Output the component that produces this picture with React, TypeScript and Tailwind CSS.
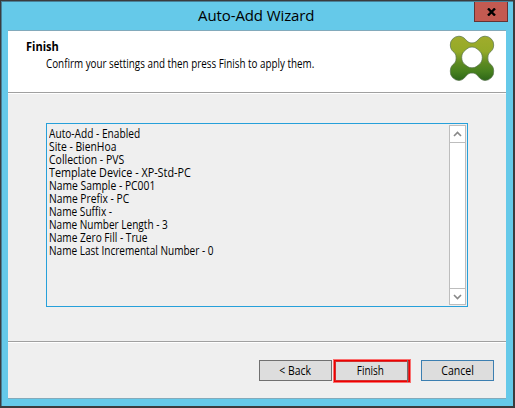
const lines = [
  { text: 'Auto-Add - Enabled', fit: 'scale-x-[0.845]' },
  { text: 'Site - BienHoa', fit: 'scale-x-[0.86]' },
  { text: 'Collection - PVS', fit: 'scale-x-[0.872]' },
  { text: 'Template Device - XP-Std-PC', fit: 'scale-x-[0.9]' },
  { text: 'Name Sample - PC001', fit: 'scale-x-[0.86]' },
  { text: 'Name Prefix - PC', fit: 'scale-x-[0.855]' },
  { text: 'Name Suffix -', fit: 'scale-x-[0.842]' },
  { text: 'Name Number Length - 3', fit: 'scale-x-[0.838]' },
  { text: 'Name Zero Fill - True', fit: 'scale-x-[0.845]' },
  { text: 'Name Last Incremental Number - 0', fit: 'scale-x-[0.837]' },
];

function Logo() {
  return (
    <svg width="46" height="46" viewBox="0 0 46 46" className="mt-1 mr-[11px] shrink-0">
      <defs>
        <linearGradient id="leaf" x1="0" y1="0" x2="0" y2="1">
          <stop offset="0" stopColor="#a0ac2c" />
          <stop offset="0.35" stopColor="#94aa28" />
          <stop offset="0.6" stopColor="#5e8a22" />
          <stop offset="0.8" stopColor="#47801e" />
          <stop offset="1" stopColor="#2d6618" />
        </linearGradient>
      </defs>
      <path
        fillRule="evenodd"
        fill="url(#leaf)"
        stroke="#55704a"
        strokeWidth="0.7"
        d="M10 1.2 C14 1.2 16 3.8 18 6 C20.5 8.6 25.5 8.6 28 6 C30 3.8 32 1.2 36 1.2 A8.7 8.7 0 0 1 44.7 10 C44.7 14 42.8 16 40.2 18 C38.4 20.5 38.4 25.5 40.2 28 C42.8 30 44.7 32 44.7 36 A8.7 8.7 0 0 1 36 45.4 C32 45.4 30 42.2 28 40 C25.5 37.4 20.5 37.4 18 40 C16 42.2 14 45.4 10 45.4 A8.7 8.7 0 0 1 1.3 36 C1.3 32 3.2 30 5.8 28 C7.6 25.5 7.6 20.5 5.8 18 C3.2 16 1.3 14 1.3 10 A8.7 8.7 0 0 1 10 1.2 Z M23 12 C19.5 12 18.3 13.8 16.3 15.2 C14.3 16.7 12.7 19 12.7 22.4 C12.7 26.1 14.3 28.300 16.300 29.800 C18.300 31.300 19.500 32.800 23 32.800 C26.500 32.800 27.700 31.300 29.700 29.800 C31.700 28.300 33.300 26.100 33.300 22.400 C33.300 19 31.700 16.700 29.700 15.200 C27.700 13.800 26.500 12 23 12 Z"
      />
    </svg>
  );
}

function Arrow({ down = false }: { down?: boolean }) {
  return (
    <svg width="9" height="6" viewBox="0 0 9 6" className={down ? 'rotate-180' : ''}>
      <path d="M1 5 L4.5 1.5 L8 5" fill="none" stroke="#888" strokeWidth="1.6" />
    </svg>
  );
}

export default function App() {
  return (
    <div className="h-[408px] w-[515px] overflow-hidden bg-[#3b3b3d] pt-px pr-[2px] pb-[2px] pl-px font-['Open_Sans',sans-serif] text-[12px] text-black">
      <div className="flex h-[405px] w-[512px] flex-col border-t border-l border-[#4a8097] bg-[#65c9e9]">
        <header className="flex h-7 shrink-0 items-start">
          <h1 className="w-[472px] pl-[196px] text-[15px] leading-[27px] tracking-[-0.1px] whitespace-nowrap">
            Auto-Add Wizard
          </h1>
          <button className="flex h-5 w-[34px] shrink-0 items-center justify-center border border-t-0 border-[#643334] bg-[#c35a51]">
            <svg width="9" height="8" viewBox="0 0 9 8">
              <path d="M1 0.5 L8 7.5 M8 0.5 L1 7.5" stroke="#000" strokeWidth="2.4" />
            </svg>
          </button>
        </header>
        <main className="ml-1.5 flex h-[369px] w-[498px] flex-col border-t border-b border-[#82aabb] bg-[#efefef]">
          <section className="flex h-[62px] shrink-0 justify-between border-b border-[#a0a0a0] bg-white">
            <div className="w-[400px] pt-[7px] pl-[18px] whitespace-nowrap">
              <h2 className="h-[17px] leading-[17px] font-bold">
                <span className="inline-block origin-left scale-x-[0.92]">Finish</span>
              </h2>
              <p className="pl-5 leading-[18px]">
                <span className="inline-block origin-left scale-x-[0.82]">
                  Confirm your settings and then press Finish to apply them.
                </span>
              </p>
            </div>
            <Logo />
          </section>
          <section className="flex h-[249px] shrink-0 items-start border-t border-b border-t-white border-b-[#a0a0a0] pt-[29px] pl-[38px]">
            <div className="flex h-[184px] w-[422px] justify-between border border-[#26a0da] p-px">
              <div className="pt-[2px] pl-px leading-[13px] whitespace-nowrap">
                {lines.map(({ text, fit }) => (
                  <p key={text} className={`origin-left ${fit} w-max`}>
                    {text}
                  </p>
                ))}
              </div>
              <div className="flex w-[17px] flex-col border border-[#bdbdbd] bg-white">
                <div className="flex h-[17px] items-center justify-center border-b border-[#bdbdbd]">
                  <Arrow />
                </div>
                <div className="grow" />
                <div className="flex h-4 items-center justify-center border-t border-[#bdbdbd]">
                  <Arrow down />
                </div>
              </div>
            </div>
          </section>
          <footer className="flex grow items-start border-t border-white pt-4 pl-[251px]">
            <button className="mt-px h-[21px] w-[73px] border border-[#707070] bg-[#ddd] leading-5">
              <span className="inline-block scale-x-[0.87]">&lt; Back</span>
            </button>
            <div className="ml-px flex h-6 w-[78px] border border-[#f87070] bg-[#ddd] shadow-[inset_0_0_0_1px_#f00000,inset_0_0_0_2px_#d03030]">
              <button className="w-[74px] border-r border-[#707070] leading-[22px]">
                <span className="inline-block scale-x-[0.83]">Finish</span>
              </button>
            </div>
            <button className="mt-px ml-2.5 h-[21px] w-[73px] border border-[#3c7fb1] bg-[#ddd] leading-5">
              <span className="inline-block scale-x-[0.88]">Cancel</span>
            </button>
          </footer>
        </main>
      </div>
    </div>
  );
}
